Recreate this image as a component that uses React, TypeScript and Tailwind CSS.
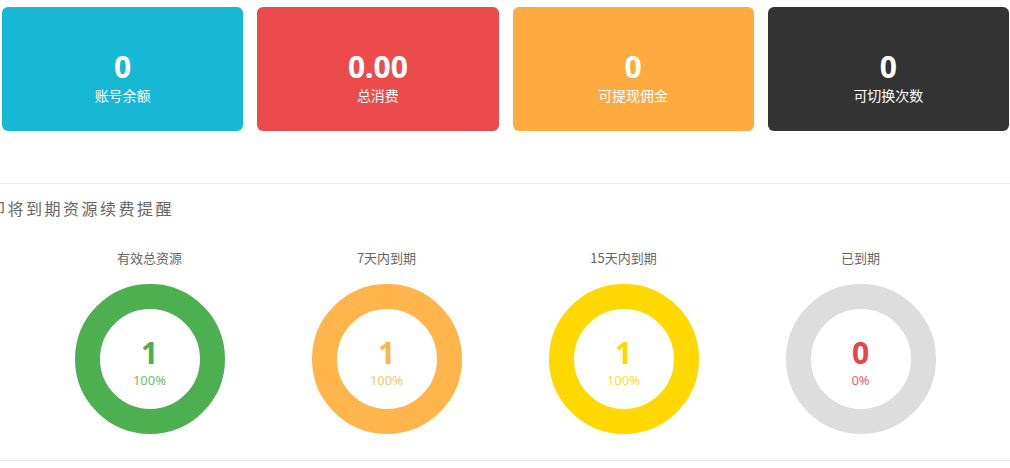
import React from "react";

const cards = [
  { value: "0", label: "账号余额", bg: "bg-[#17b8d5]" },
  { value: "0.00", label: "总消费", bg: "bg-[#eb4b4b]" },
  { value: "0", label: "可提现佣金", bg: "bg-[#ffaa3e]" },
  { value: "0", label: "可切换次数", bg: "bg-[#333333]" },
];

const rings = [
  { title: "有效总资源", value: "1", pct: "100%", ring: "border-[#4caf50]", num: "text-[#4caf50]", pc: "text-[#6cc070]" },
  { title: "7天内到期", value: "1", pct: "100%", ring: "border-[#ffb54c]", num: "text-[#ffb54c]", pc: "text-[#ffc36e]" },
  { title: "15天内到期", value: "1", pct: "100%", ring: "border-[#ffd800]", num: "text-[#ffd800]", pc: "text-[#ffdc33]" },
  { title: "已到期", value: "0", pct: "0%", ring: "border-[#dddddd]", num: "text-[#e84545]", pc: "text-[#ec6262]" },
];

export default function App() {
  return (
    <div
      className="w-[1010px] h-[468px] overflow-hidden bg-white"
      style={{ fontFamily: '"Noto Sans", "Noto Sans CJK SC", sans-serif' }}
    >
      <div className="grid grid-cols-4 gap-[14px] pl-[2px] pr-[1px] pt-[7px]">
        {cards.map((c, i) => (
          <div
            key={i}
            className={`${c.bg} h-[124px] rounded-[6px] flex flex-col items-center justify-center pt-[22px] text-white`}
          >
            <div className="text-[30px] font-bold leading-[32px] mt-[-4px]">{c.value}</div>
            <div className="text-[14px] leading-[20px] mt-[2px]" style={{ fontFamily: '"Noto Sans CJK SC", sans-serif' }}>
              {c.label}
            </div>
          </div>
        ))}
      </div>
      <div className="mt-[52px] border-t border-[#e8e8e8]">
        <div
          className="ml-[-11px] mt-[13px] text-[16px] leading-[22px] tracking-[2.5px] text-[#666]"
          style={{ fontFamily: '"Noto Sans CJK SC", sans-serif' }}
        >
          即将到期资源续费提醒
        </div>
        <div className="ml-[31px] w-[948px] grid grid-cols-4 mt-[30px]">
          {rings.map((r, i) => (
            <div key={i} className="flex flex-col items-center">
              <div className="text-[13px] leading-[18px] text-[#666]" style={{ fontFamily: '"Noto Sans CJK SC", sans-serif' }}>
                {r.title}
              </div>
              <div className={`mt-[17px] w-[150px] h-[150px] rounded-full border-[25px] ${r.ring} flex flex-col items-center justify-center pt-[12px]`}>
                <div className={`text-[30px] font-bold leading-[32px] mt-[-4px] ${r.num}`}>{r.value}</div>
                <div className={`text-[13px] leading-[18px] mt-[2px] ${r.pc}`}>{r.pct}</div>
              </div>
            </div>
          ))}
        </div>
        <div className="mt-[26px] border-t border-[#e8e8e8]" />
      </div>
    </div>
  );
}
